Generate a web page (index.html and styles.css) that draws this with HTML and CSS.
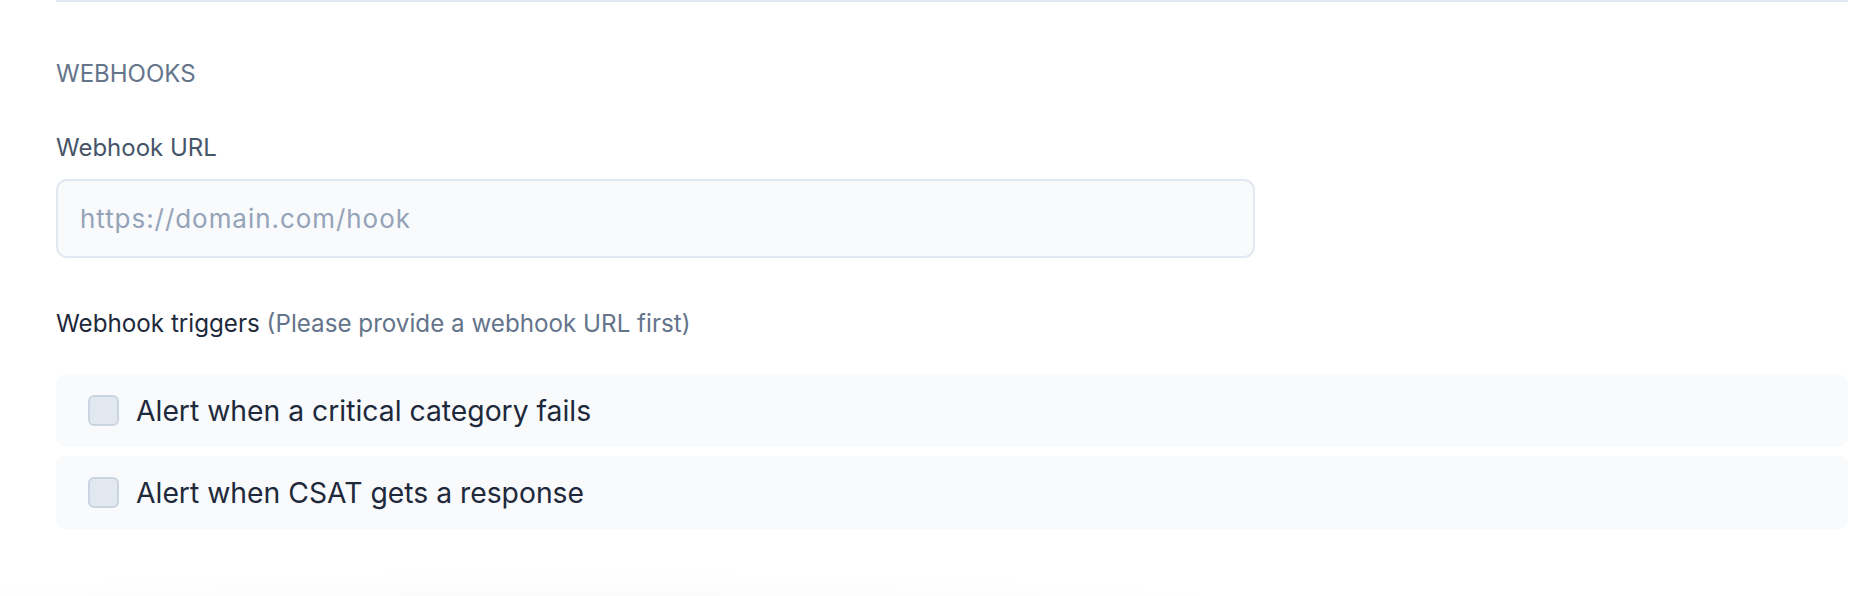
FILE: index.html
```html
<!DOCTYPE html>
<html lang="en">
<head>
<meta charset="utf-8">
<title>Webhooks</title>
<link rel="stylesheet" href="styles.css">
</head>
<body>
<main class="page">
  <section class="section">
    <h2 class="section-title">WEBHOOKS</h2>
    <label class="field-label" for="hook">Webhook URL</label>
    <input class="text-input" id="hook" type="text" placeholder="https://domain.com/hook">
    <p class="triggers-label">Webhook triggers <span class="hint">(Please provide a webhook URL first)</span></p>
    <div class="trigger-list">
      <label class="trigger-row">
        <span class="checkbox"></span>
        <span class="trigger-text">Alert when a critical category fails</span>
      </label>
      <label class="trigger-row">
        <span class="checkbox"></span>
        <span class="trigger-text">Alert when CSAT gets a response</span>
      </label>
    </div>
  </section>
</main>
</body>
</html>
```

FILE: styles.css
```css
* { box-sizing: border-box; }
html, body { margin: 0; padding: 0; }
body {
  width: 1876px;
  height: 596px;
  overflow: hidden;
  font-family: Inter, "Noto Sans", sans-serif;
  background:
    radial-gradient(ellipse 760px 40px at 560px 610px, rgba(0,0,0,0.025), rgba(0,0,0,0) 100%),
    #ffffff;
}
.page {
  padding: 0 28px 0 56px;
}
.section {
  display: flex;
  flex-direction: column;
  align-items: stretch;
  border-top: 2px solid #e2e8f0;
}
.section-title {
  margin: 56px 0 0;
  font-size: 24px;
  line-height: 32px;
  font-weight: 400;
  color: #64748b;
}
.field-label {
  margin-top: 42px;
  font-size: 24px;
  line-height: 32px;
  color: #475569;
}
.text-input {
  margin-top: 15px;
  width: 1199px;
  height: 79px;
  padding: 0 22px;
  border: 2px solid #e2e8f0;
  border-radius: 11px;
  background: #f8fafc;
  font-family: Inter, "Noto Sans", sans-serif;
  font-size: 26px;
  letter-spacing: 0.95px;
  color: #1e293b;
  outline: none;
}
.text-input::placeholder { color: #94a3b8; }
.triggers-label {
  margin: 50px 0 0;
  font-size: 24.2px;
  line-height: 32px;
  color: #1e293b;
}
.hint { color: #64748b; }
.trigger-list {
  margin-top: 34px;
  display: flex;
  flex-direction: column;
  gap: 9px;
}
.trigger-row {
  display: flex;
  align-items: center;
  gap: 17px;
  height: 73px;
  padding-left: 32px;
  border-radius: 9px;
  background: #f8fafc;
}
.checkbox {
  width: 31px;
  height: 31px;
  border: 2px solid #cbd5e1;
  border-radius: 6px;
  background: #e2e8f0;
  flex: none;
}
.trigger-text {
  font-size: 28.3px;
  line-height: 36px;
  color: #1e293b;
}
```
